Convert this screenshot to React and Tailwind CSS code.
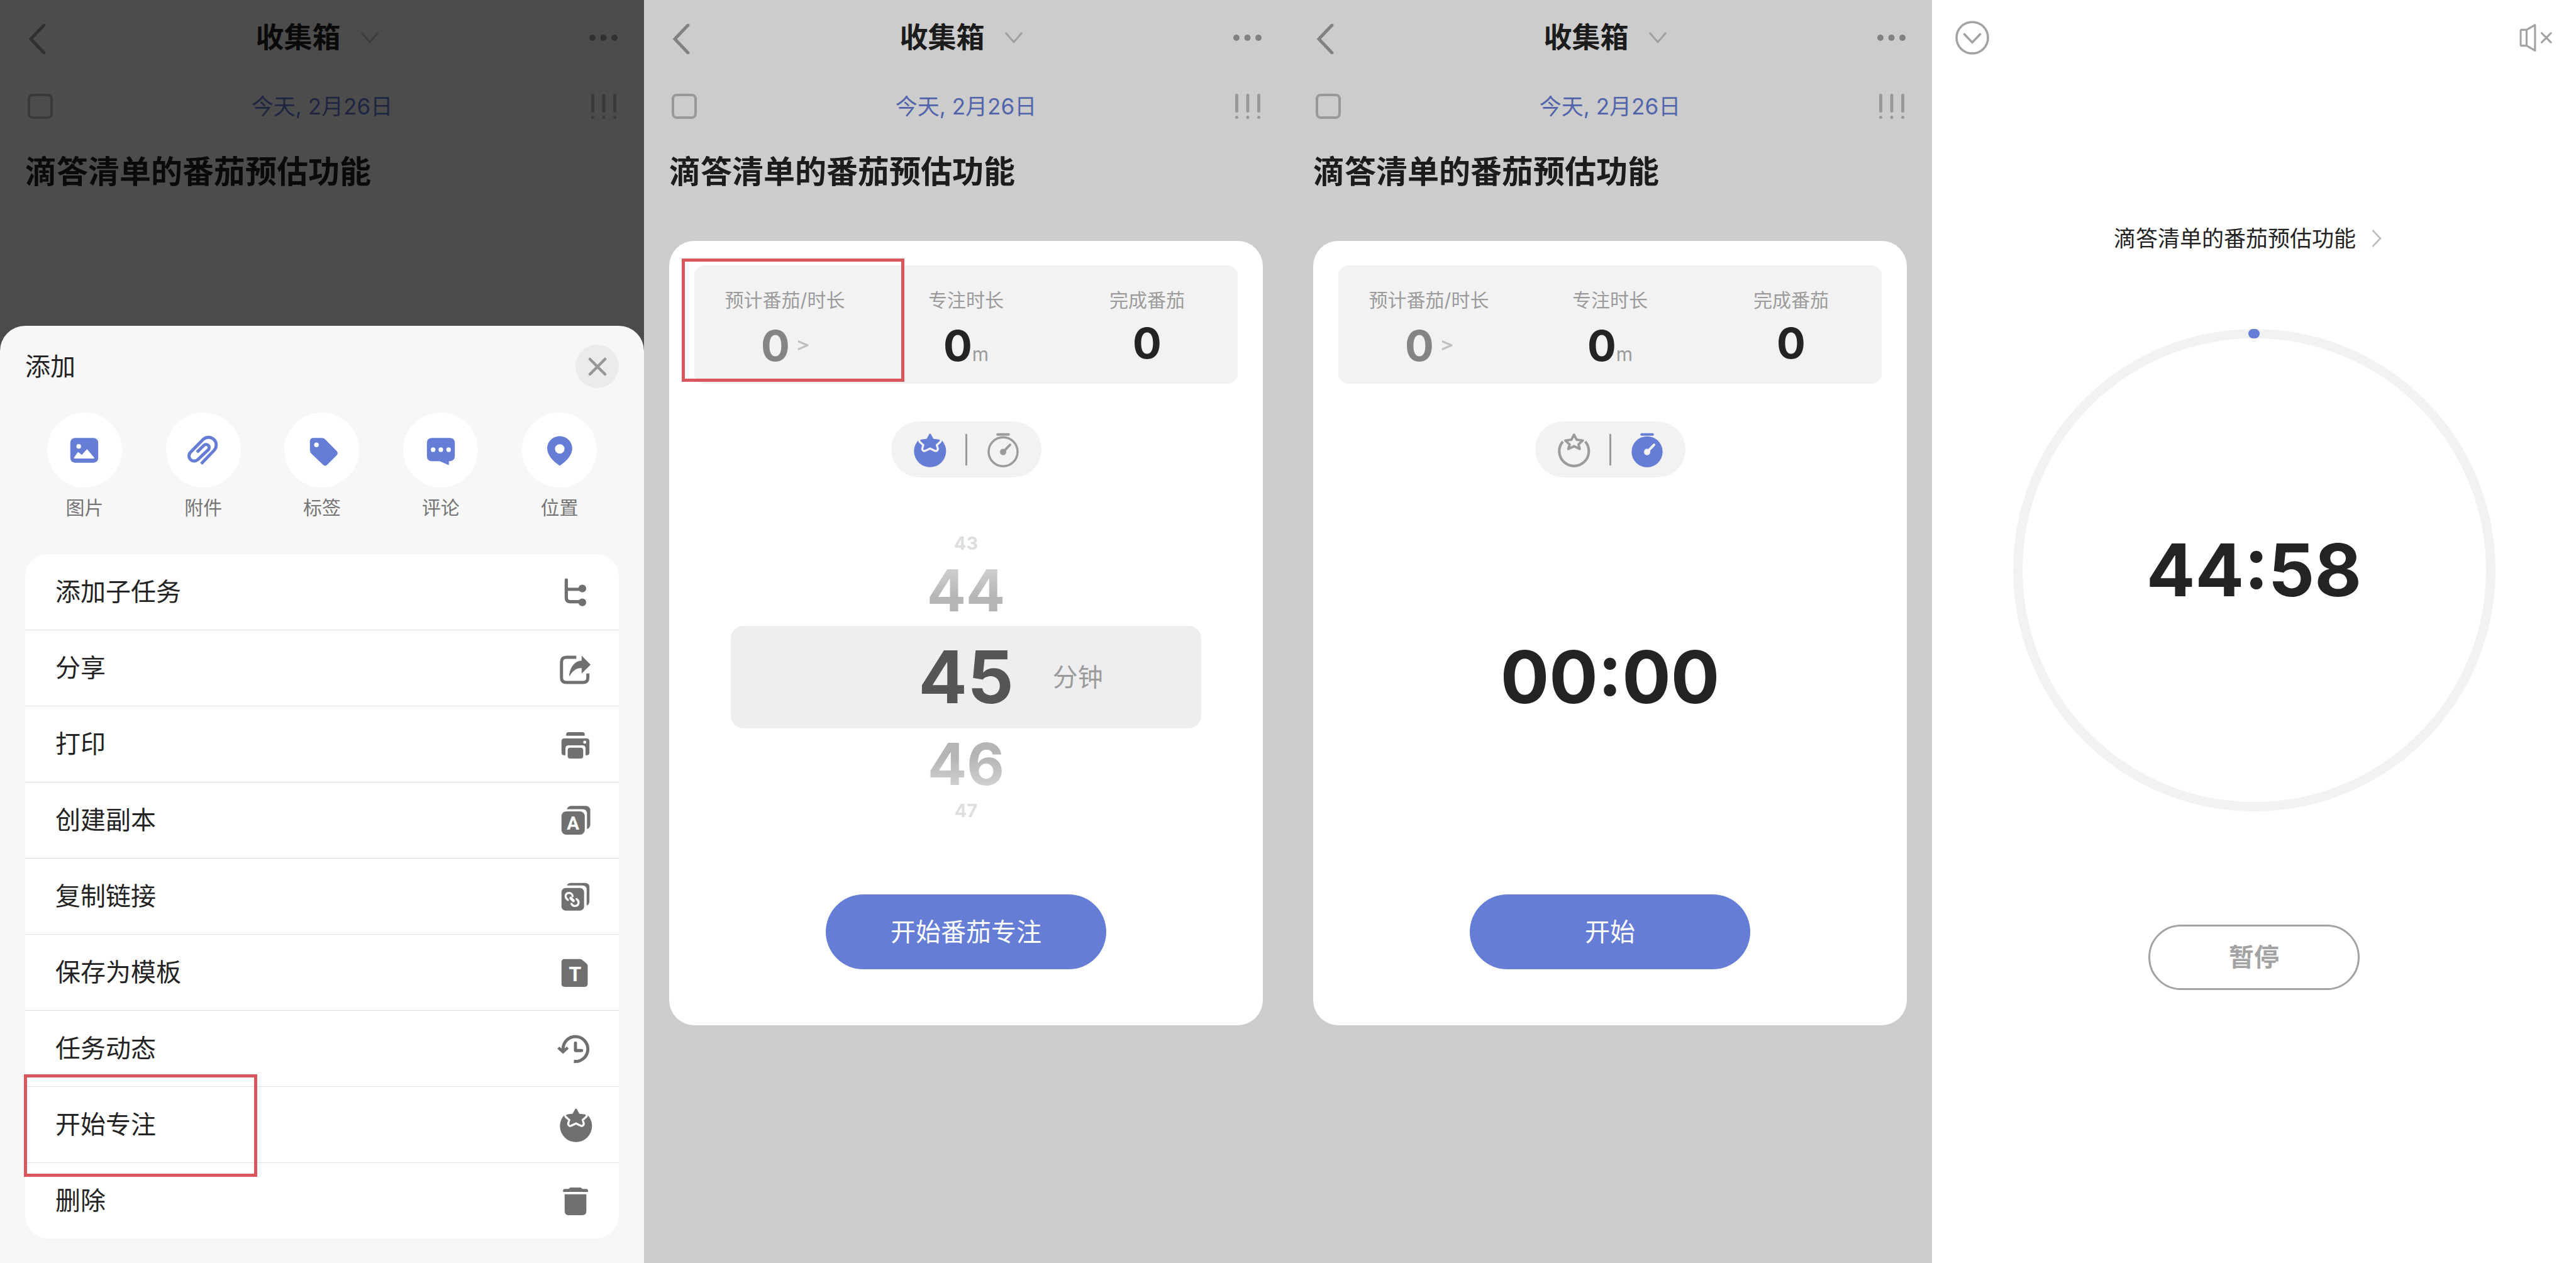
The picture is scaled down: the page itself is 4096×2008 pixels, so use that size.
import React from "react";

const STAR =
  "M37.5 7.5L42.6 17.2L54.5 18.6L46 26.2L48.6 35L37.5 29.8L26.4 35L29 26.2L20.5 18.6L32.4 17.2Z";

function Icon({ children, className = "" }) {
  return (
    <svg viewBox="0 0 73 73" className={`size-[60px] shrink-0 ${className}`} fill="currentColor" aria-hidden="true">
      {children}
    </svg>
  );
}

const stroked = { fill: "none", stroke: "currentColor" };

/* ---------- quick-add icons ---------- */

const PictureIcon = () => (
  <Icon>
    <rect x="9.5" y="12.5" width="54" height="48" rx="9" />
    <circle cx="25.8" cy="28.8" r="4.5" fill="#fff" />
    <path d="M17.5 51.2L24.5 41L31.8 46.5L41.8 35.5L54.8 51.2Z" fill="#fff" stroke="#fff" strokeWidth="2" strokeLinejoin="round" />
  </Icon>
);

const ClipIcon = () => (
  <Icon>
    <path
      {...stroked}
      strokeWidth="6"
      d="M32.8 62.5L57.8 36.4A15 15 0 0 0 36.6 15.2L12.1 40.1A10 10 0 0 0 26.3 54.3L47 34.7A6 6 0 0 0 38.6 26.3L24.5 40.3"
    />
  </Icon>
);

const TagIcon = () => (
  <Icon>
    <path
      fillRule="evenodd"
      d="M20 12.5H36Q40 12.5 43 15.5L64.5 37.5Q69 42 64.5 46.5L47 64Q42.4 68.5 38 64L16 43Q13.1 40 13.1 36V19.5Q13.1 12.5 20 12.5ZM25.8 21.3a4.5 4.5 0 1 0 0 9a4.5 4.5 0 1 0 0-9Z"
    />
  </Icon>
);

const CommentIcon = () => (
  <Icon>
    <path d="M19.5 12.5H53.5Q63.5 12.5 63.5 22.5V47.5Q63.5 57.5 52 57.5V65.2L34.5 57.5H19.5Q9.5 57.5 9.5 47.5V22.5Q9.5 12.5 19.5 12.5Z" />
    <circle cx="21.5" cy="35.2" r="4.4" fill="#fff" />
    <circle cx="36.5" cy="35.2" r="4.4" fill="#fff" />
    <circle cx="51.5" cy="35.2" r="4.4" fill="#fff" />
  </Icon>
);

const PinIcon = () => (
  <Icon>
    <path
      fillRule="evenodd"
      d="M36.5 9.2C23 9.2 12.3 19.8 12.3 33C12.3 46.5 24.5 58.5 36.5 66.2C48.5 58.5 60.7 46.5 60.7 33C60.7 19.8 50 9.2 36.5 9.2ZM36.5 24.5a9.2 9.2 0 1 1 0 18.4a9.2 9.2 0 1 1 0-18.4Z"
    />
  </Icon>
);

/* ---------- list icons ---------- */

const SubtaskIcon = () => (
  <Icon>
    <path {...stroked} strokeWidth="6.4" strokeLinecap="round" d="M18.8 13.4V48Q18.8 55.5 26.5 55.5H50" />
    <path {...stroked} strokeWidth="6" d="M18.8 31.5H50" />
    <circle cx="49.8" cy="30" r="7.5" />
    <circle cx="49.8" cy="56.8" r="7.5" />
  </Icon>
);

const ShareIcon = () => (
  <Icon>
    <path {...stroked} strokeWidth="6" d="M38.2 15.8H19Q9.5 15.8 9.5 25.3V55Q9.5 64.5 19 64.5H51Q60.5 64.5 60.5 55V47.2" />
    <path d="M48.5 12.8L65.8 30.2L48.5 47.3V36.5C38.5 36.5 31 42 25 52.2Q23.8 52.2 24.5 49.5C27 33 36 22.5 48.5 22.2Z" />
  </Icon>
);

const PrintIcon = () => (
  <Icon>
    <path d="M18.5 20.5V18Q18.5 13.5 23 13.5H50Q54.5 13.5 54.5 18V20.5Z" />
    <path d="M15 25.5H58Q63.5 25.5 63.5 31V53Q63.5 58.2 58.3 58.2H56V45Q56 38.8 50 38.8H23.5Q17.2 38.8 17.2 45V58.2H14.7Q9.5 58.2 9.5 53V31Q9.5 25.5 15 25.5Z" />
    <rect x="21.5" y="43.5" width="30" height="21" rx="5" />
    <circle cx="54.5" cy="32.8" r="3" fill="#fff" />
  </Icon>
);

const CopyIcon = () => (
  <Icon>
    <rect x="9.5" y="19.5" width="45" height="45" rx="9" />
    <path d="M19.8 15.2Q22 8.8 29 8.8H56Q65.2 8.8 65.2 18V44Q65.2 51.5 58.8 53.5V24Q58.8 15.2 50 15.2Z" />
    <text x="32" y="55" textAnchor="middle" fill="#fff" fontSize="36" fontWeight="700" className="font-['Roboto',sans-serif]">
      A
    </text>
  </Icon>
);

const LinkIcon = () => (
  <Icon>
    <rect x="9.5" y="20.5" width="43.7" height="43.7" rx="8" />
    <path d="M19.8 15.5Q22 10.5 28 10.5H55Q63.5 10.5 63.5 19V45Q63.5 52.5 58.2 54.5V24Q58.2 15.5 50 15.5Z" />
    <g fill="none" stroke="#fff" strokeWidth="4" strokeLinecap="round">
      <path d="M21.8 43.6C14.5 37.5 17.5 30 24.2 30C28 30 30.8 32.8 31 36.4" />
      <path d="M28.8 51.2C30.5 54.5 33 55.5 36 55.2C43 54.5 45 46.5 38.6 41.8" />
      <path d="M27.4 40L32.6 45.2" strokeWidth="5.4" />
    </g>
  </Icon>
);

const TemplateIcon = () => (
  <Icon>
    <path d="M15.5 10.5H44.5Q47 10.5 49 12L57.5 18.8Q60.2 21 60.2 24.5V58.5Q60.2 64.5 54.2 64.5H15.5Q9.5 64.5 9.5 58.5V16.5Q9.5 10.5 15.5 10.5Z" />
    <text x="35.8" y="53.5" textAnchor="middle" fill="#fff" fontSize="38" fontWeight="700" className="font-['Inter',sans-serif]">
      T
    </text>
  </Icon>
);

const HistoryIcon = () => (
  <Icon>
    <path {...stroked} strokeWidth="6" d="M12.5 41V37.5A24 24 0 1 1 33.5 61.3" />
    <path d="M1.5 36.8L5.2 32.8L12.5 39L19.8 32.8L23.4 36.8L12.5 46.7Z" />
    <path {...stroked} strokeWidth="6" strokeLinecap="round" strokeLinejoin="round" d="M36.5 25.8V40.5H48.5" />
  </Icon>
);

const TomatoIcon = ({ halo = "#fff" }) => (
  <Icon>
    <path d="M14.2 18.8A31 31 0 1 0 60.8 18.8Z" />
    <path d={STAR} fill={halo} stroke={halo} strokeWidth="12" strokeLinejoin="round" />
    <path d={STAR} stroke="currentColor" strokeWidth="4" strokeLinejoin="round" />
  </Icon>
);

const TomatoOutlineIcon = () => (
  <Icon>
    <path {...stroked} strokeWidth="5" d="M16 20.5A28.6 28.6 0 1 0 59 20.5" />
    <path d={STAR} fill="#f2f2f2" stroke="#f2f2f2" strokeWidth="9" />
    <path d={STAR} {...stroked} strokeWidth="4.6" strokeLinejoin="round" />
  </Icon>
);

const StopwatchIcon = ({ solid = false }) => (
  <Icon>
    <rect x="23.5" y="4.5" width="26" height="4.8" rx="2" />
    {solid ? <circle cx="36.5" cy="40.5" r="30" /> : <circle cx="36.5" cy="40.5" r="28" {...stroked} strokeWidth="4.2" />}
    <g className={solid ? "text-[#f2f2f2]" : ""}>
      <circle cx="36.5" cy="40.8" r="6.2" fill="currentColor" />
      <path {...stroked} strokeWidth="4.8" strokeLinecap="round" d="M36.5 40.8L50 27" />
    </g>
  </Icon>
);

const TrashIcon = () => (
  <Icon>
    <path d="M12.5 19.5V17Q12.5 13.8 16 13.8H23L26 11.4Q26.6 11 27.6 11H45.6Q46.6 11 47.2 11.4L50.2 13.8H57.3Q60.8 13.8 60.8 17V19.5Z" />
    <path d="M15.6 24H57.6V57Q57.6 64.4 50.2 64.4H23Q15.6 64.4 15.6 57Z" />
  </Icon>
);

/* ---------- data ---------- */

const quickActions = [
  ["图片", PictureIcon],
  ["附件", ClipIcon],
  ["标签", TagIcon],
  ["评论", CommentIcon],
  ["位置", PinIcon],
];

const menuItems = [
  ["添加子任务", SubtaskIcon],
  ["分享", ShareIcon],
  ["打印", PrintIcon],
  ["创建副本", CopyIcon],
  ["复制链接", LinkIcon],
  ["保存为模板", TemplateIcon],
  ["任务动态", HistoryIcon],
  ["开始专注", TomatoIcon],
  ["删除", TrashIcon],
];

/* ---------- shared pieces ---------- */

function TaskHeader() {
  return (
    <header className="flex flex-col">
      <div className="grid h-[120px] grid-cols-[1fr_auto_1fr] items-center px-10 text-[#a2a2a2]">
        <button aria-label="返回" className="justify-self-start">
          <svg viewBox="0 0 34 48" className="mt-1 h-12 w-[34px]" fill="none" stroke="currentColor" strokeWidth="5" aria-hidden="true">
            <path d="M30 2L9 24L30 46" strokeLinecap="round" />
          </svg>
        </button>
        <button className="flex items-center gap-8 pr-4 text-[#232323]">
          <span className="text-[45px] leading-[60px] font-bold">收集箱</span>
          <svg viewBox="0 0 28 18" className="h-[18px] w-7 text-[#c8c8c8]" fill="none" stroke="currentColor" strokeWidth="3" aria-hidden="true">
            <path d="M1 1L14 16L27 1" />
          </svg>
        </button>
        <button aria-label="更多" className="justify-self-end">
          <svg viewBox="0 0 48 12" className="h-3 w-12" fill="currentColor" aria-hidden="true">
            <circle cx="6" cy="6" r="5" />
            <circle cx="23.5" cy="6" r="5" />
            <circle cx="41" cy="6" r="5" />
          </svg>
        </button>
      </div>
      <div className="flex h-[98px] items-center justify-between px-11">
        <input type="checkbox" aria-label="完成任务" className="size-10 appearance-none rounded-lg border-4 border-[#bfbfbf]" />
        <button className="text-[35px] leading-10 text-[#667dd6]">今天, 2月26日</button>
        <button aria-label="优先级" className="text-[#bfbfbf]">
          <svg viewBox="0 0 40 40" className="size-10" fill="currentColor" aria-hidden="true">
            <rect x="0" y="0" width="5" height="30" rx="2.5" />
            <rect x="17.5" y="0" width="5" height="30" rx="2.5" />
            <rect x="35" y="0" width="5" height="30" rx="2.5" />
            <circle cx="2.5" cy="37.5" r="2.5" />
            <circle cx="20" cy="37.5" r="2.5" />
            <circle cx="37.5" cy="37.5" r="2.5" />
          </svg>
        </button>
      </div>
      <h1 className="px-10 text-[50px] leading-[110px] font-bold text-[#232323]">滴答清单的番茄预估功能</h1>
    </header>
  );
}

function Stats({ highlighted }) {
  return (
    <div className="relative mx-10 grid h-[188px] grid-cols-3 rounded-2xl bg-[#f2f2f2] pt-[35px] text-center">
      <button className="flex flex-col items-center">
        <span className="text-[30px] leading-10 text-[#9b9b9b]">预计番茄/时长</span>
        <span className="mt-5 flex items-center gap-3 text-[68px] leading-[64px] font-bold text-[#848484]">
          0
          <svg viewBox="0 0 18 16" className="h-4 w-[18px] text-[#c0c0c0]" fill="none" stroke="currentColor" strokeWidth="3" aria-hidden="true">
            <path d="M1 1.5L16 8L1 14.5" strokeLinejoin="round" />
          </svg>
        </span>
      </button>
      <div className="flex flex-col items-center">
        <span className="text-[30px] leading-10 text-[#9b9b9b]">专注时长</span>
        <span className="mt-5 text-[68px] leading-[64px] font-bold text-[#232323]">
          0<span className="text-[30px] font-normal text-[#9b9b9b]">m</span>
        </span>
      </div>
      <div className="flex flex-col items-center">
        <span className="text-[30px] leading-10 text-[#9b9b9b]">完成番茄</span>
        <span className="mt-5 text-[68px] leading-[56px] font-bold text-[#232323]">0</span>
      </div>
      {highlighted && (
        <div className="pointer-events-none absolute -top-[11px] -left-5 h-[196px] w-[354px] border-[5px] border-[#d9565c]" />
      )}
    </div>
  );
}

function ModeSwitch({ mode }) {
  const tomato = mode === "tomato";
  return (
    <div className="mt-[60px] flex h-[89px] items-center gap-[27px] self-center rounded-full bg-[#f2f2f2] px-[31px]">
      <button aria-label="番茄计时" aria-pressed={tomato} className={tomato ? "text-[#667dd6]" : "text-[#9b9b9b]"}>
        {tomato ? <TomatoIcon halo="#f2f2f2" /> : <TomatoOutlineIcon />}
      </button>
      <span className="h-[50px] w-[3px] bg-[#9b9b9b]" />
      <button aria-label="正计时" aria-pressed={!tomato} className={tomato ? "text-[#9b9b9b]" : "text-[#667dd6]"}>
        <StopwatchIcon solid={!tomato} />
      </button>
    </div>
  );
}

function MinutePicker() {
  return (
    <div className="flex flex-1 flex-col items-stretch text-center font-bold">
      <div className="text-[29px] leading-9 text-[#dedede]">43</div>
      <div className="h-[113px] text-[92px] leading-[113px] text-[#b5b5b5] [mask-image:linear-gradient(to_bottom,#0009_15%,#000_60%)]">
        44
      </div>
      <div className="mx-[98px] grid h-[163px] grid-cols-[1fr_auto_1fr] items-center rounded-[20px] bg-[#eeeef0]">
        <span />
        <span className="text-[115px] leading-none text-[#555557]">45</span>
        <span className="pl-[62px] text-left text-[40px] font-normal text-[#9b9b9b]">分钟</span>
      </div>
      <div className="h-[113px] text-[92px] leading-[113px] text-[#b5b5b5] [mask-image:linear-gradient(to_top,#0009_15%,#000_60%)]">
        46
      </div>
      <div className="text-[29px] leading-9 text-[#dedede]">47</div>
    </div>
  );
}

function FocusScreen({ mode, highlighted, action, children }) {
  return (
    <section className="relative bg-white">
      <TaskHeader />
      <div className="absolute inset-0 bg-black/20" />
      <div className="relative mx-10 mt-[55px] flex flex-col rounded-[40px] bg-white pt-[39px] pb-[89px]">
        <Stats highlighted={highlighted} />
        <ModeSwitch mode={mode} />
        <div className="mt-[87px] mb-[115px] flex min-h-[461px]">{children}</div>
        <button className="h-[119px] w-[446px] self-center rounded-full bg-[#667dd6] text-[40px] text-white">{action}</button>
      </div>
    </section>
  );
}

/* ---------- screens ---------- */

function MenuScreen() {
  return (
    <section className="relative flex flex-col bg-white">
      <TaskHeader />
      <div className="absolute inset-0 bg-black/70" />
      <div className="relative mt-[190px] flex-1 rounded-t-[40px] bg-[#f7f7f7] px-10 pt-[30px]">
        <div className="flex h-[69px] items-center justify-between">
          <h2 className="text-[40px] text-[#232323]">添加</h2>
          <button aria-label="关闭" className="flex size-[69px] items-center justify-center rounded-full bg-[#ebebeb] text-[#969696]">
            <svg viewBox="0 0 30 30" className="size-[30px]" fill="none" stroke="currentColor" strokeWidth="4.5" strokeLinecap="round" aria-hidden="true">
              <path d="M3 3L27 27M27 3L3 27" />
            </svg>
          </button>
        </div>
        <div className="mt-[39px] grid grid-cols-5">
          {quickActions.map(([label, Glyph]) => (
            <button key={label} className="flex flex-col items-center gap-3">
              <span className="flex size-[119px] items-center justify-center rounded-full bg-white text-[#667dd6]">
                <Glyph />
              </span>
              <span className="text-[30px] leading-10 text-[#757575]">{label}</span>
            </button>
          ))}
        </div>
        <ul className="mt-[54px] rounded-[36px] bg-white">
          {menuItems.map(([label, Glyph], i) => (
            <li key={label} className={i < menuItems.length - 1 ? "relative border-b border-[#e0e0e0]" : "relative"}>
              <button className="flex h-[120px] w-full items-center justify-between pr-[39px] pl-12 text-[40px] text-[#232323]">
                {label}
                <span className="text-[#707070]">
                  <Glyph />
                </span>
              </button>
              {label === "开始专注" && (
                <div className="pointer-events-none absolute -top-5 -left-[2px] z-10 h-[163px] w-[371px] border-[5px] border-[#d9565c]" />
              )}
            </li>
          ))}
        </ul>
      </div>
    </section>
  );
}

function TimerScreen() {
  return (
    <section className="flex flex-col items-center bg-white">
      <div className="flex h-[120px] w-full items-center justify-between px-[37px] text-[#a3a3a3]">
        <button aria-label="收起">
          <svg viewBox="0 0 54 54" className="size-[54px]" fill="none" stroke="currentColor" strokeWidth="3.6" strokeLinecap="round" aria-hidden="true">
            <circle cx="27" cy="27" r="25" />
            <path d="M14.5 21.5L27 34.5L39.5 21.5" />
          </svg>
        </button>
        <button aria-label="静音">
          <svg viewBox="0 0 64 54" className="h-[44px] w-[53px]" fill="none" stroke="currentColor" strokeWidth="3.8" strokeLinecap="round" strokeLinejoin="round" aria-hidden="true">
            <path d="M13.5 11.5H4Q2 11.5 2 13.5V40.5Q2 42.5 4 42.5H13.5L30 52V2L13.5 11.5V42.5" />
            <path d="M43 18L61 36M61 18L43 36" />
          </svg>
        </button>
      </div>
      <button className="mt-[239px] flex h-10 items-center gap-[25px] text-[35px] text-[#232323]">
        滴答清单的番茄预估功能
        <svg viewBox="0 0 36 28" className="h-7 w-9 text-[#bdbdbd]" fill="none" stroke="currentColor" strokeWidth="2.6" aria-hidden="true">
          <path d="M1.5 1L14 14L1.5 27" />
        </svg>
      </button>
      <div className="relative mt-[124px] flex size-[767px] items-center justify-center rounded-full border-[15px] border-[#f2f2f2]">
        <span className="absolute -top-[15px] left-1/2 h-[15px] w-[18px] -translate-x-1/2 rounded-full bg-[#667dd6]" />
        <time className="text-[115px] leading-none font-bold text-[#232323]">44:58</time>
      </div>
      <button className="mt-[180px] h-[104px] w-[336px] rounded-full border-[3px] border-[#a3a3a3] text-[40px] font-bold text-[#a3a3a3]">
        暂停
      </button>
    </section>
  );
}

export default function App() {
  return (
    <main className="grid min-h-screen grid-cols-4 bg-white font-['Inter','Noto_Sans_CJK_SC',sans-serif]">
      <MenuScreen />
      <FocusScreen mode="tomato" highlighted action="开始番茄专注">
        <MinutePicker />
      </FocusScreen>
      <FocusScreen mode="stopwatch" action="开始">
        <time className="m-auto text-[115px] leading-none font-bold text-[#232323]">00:00</time>
      </FocusScreen>
      <TimerScreen />
    </main>
  );
}
